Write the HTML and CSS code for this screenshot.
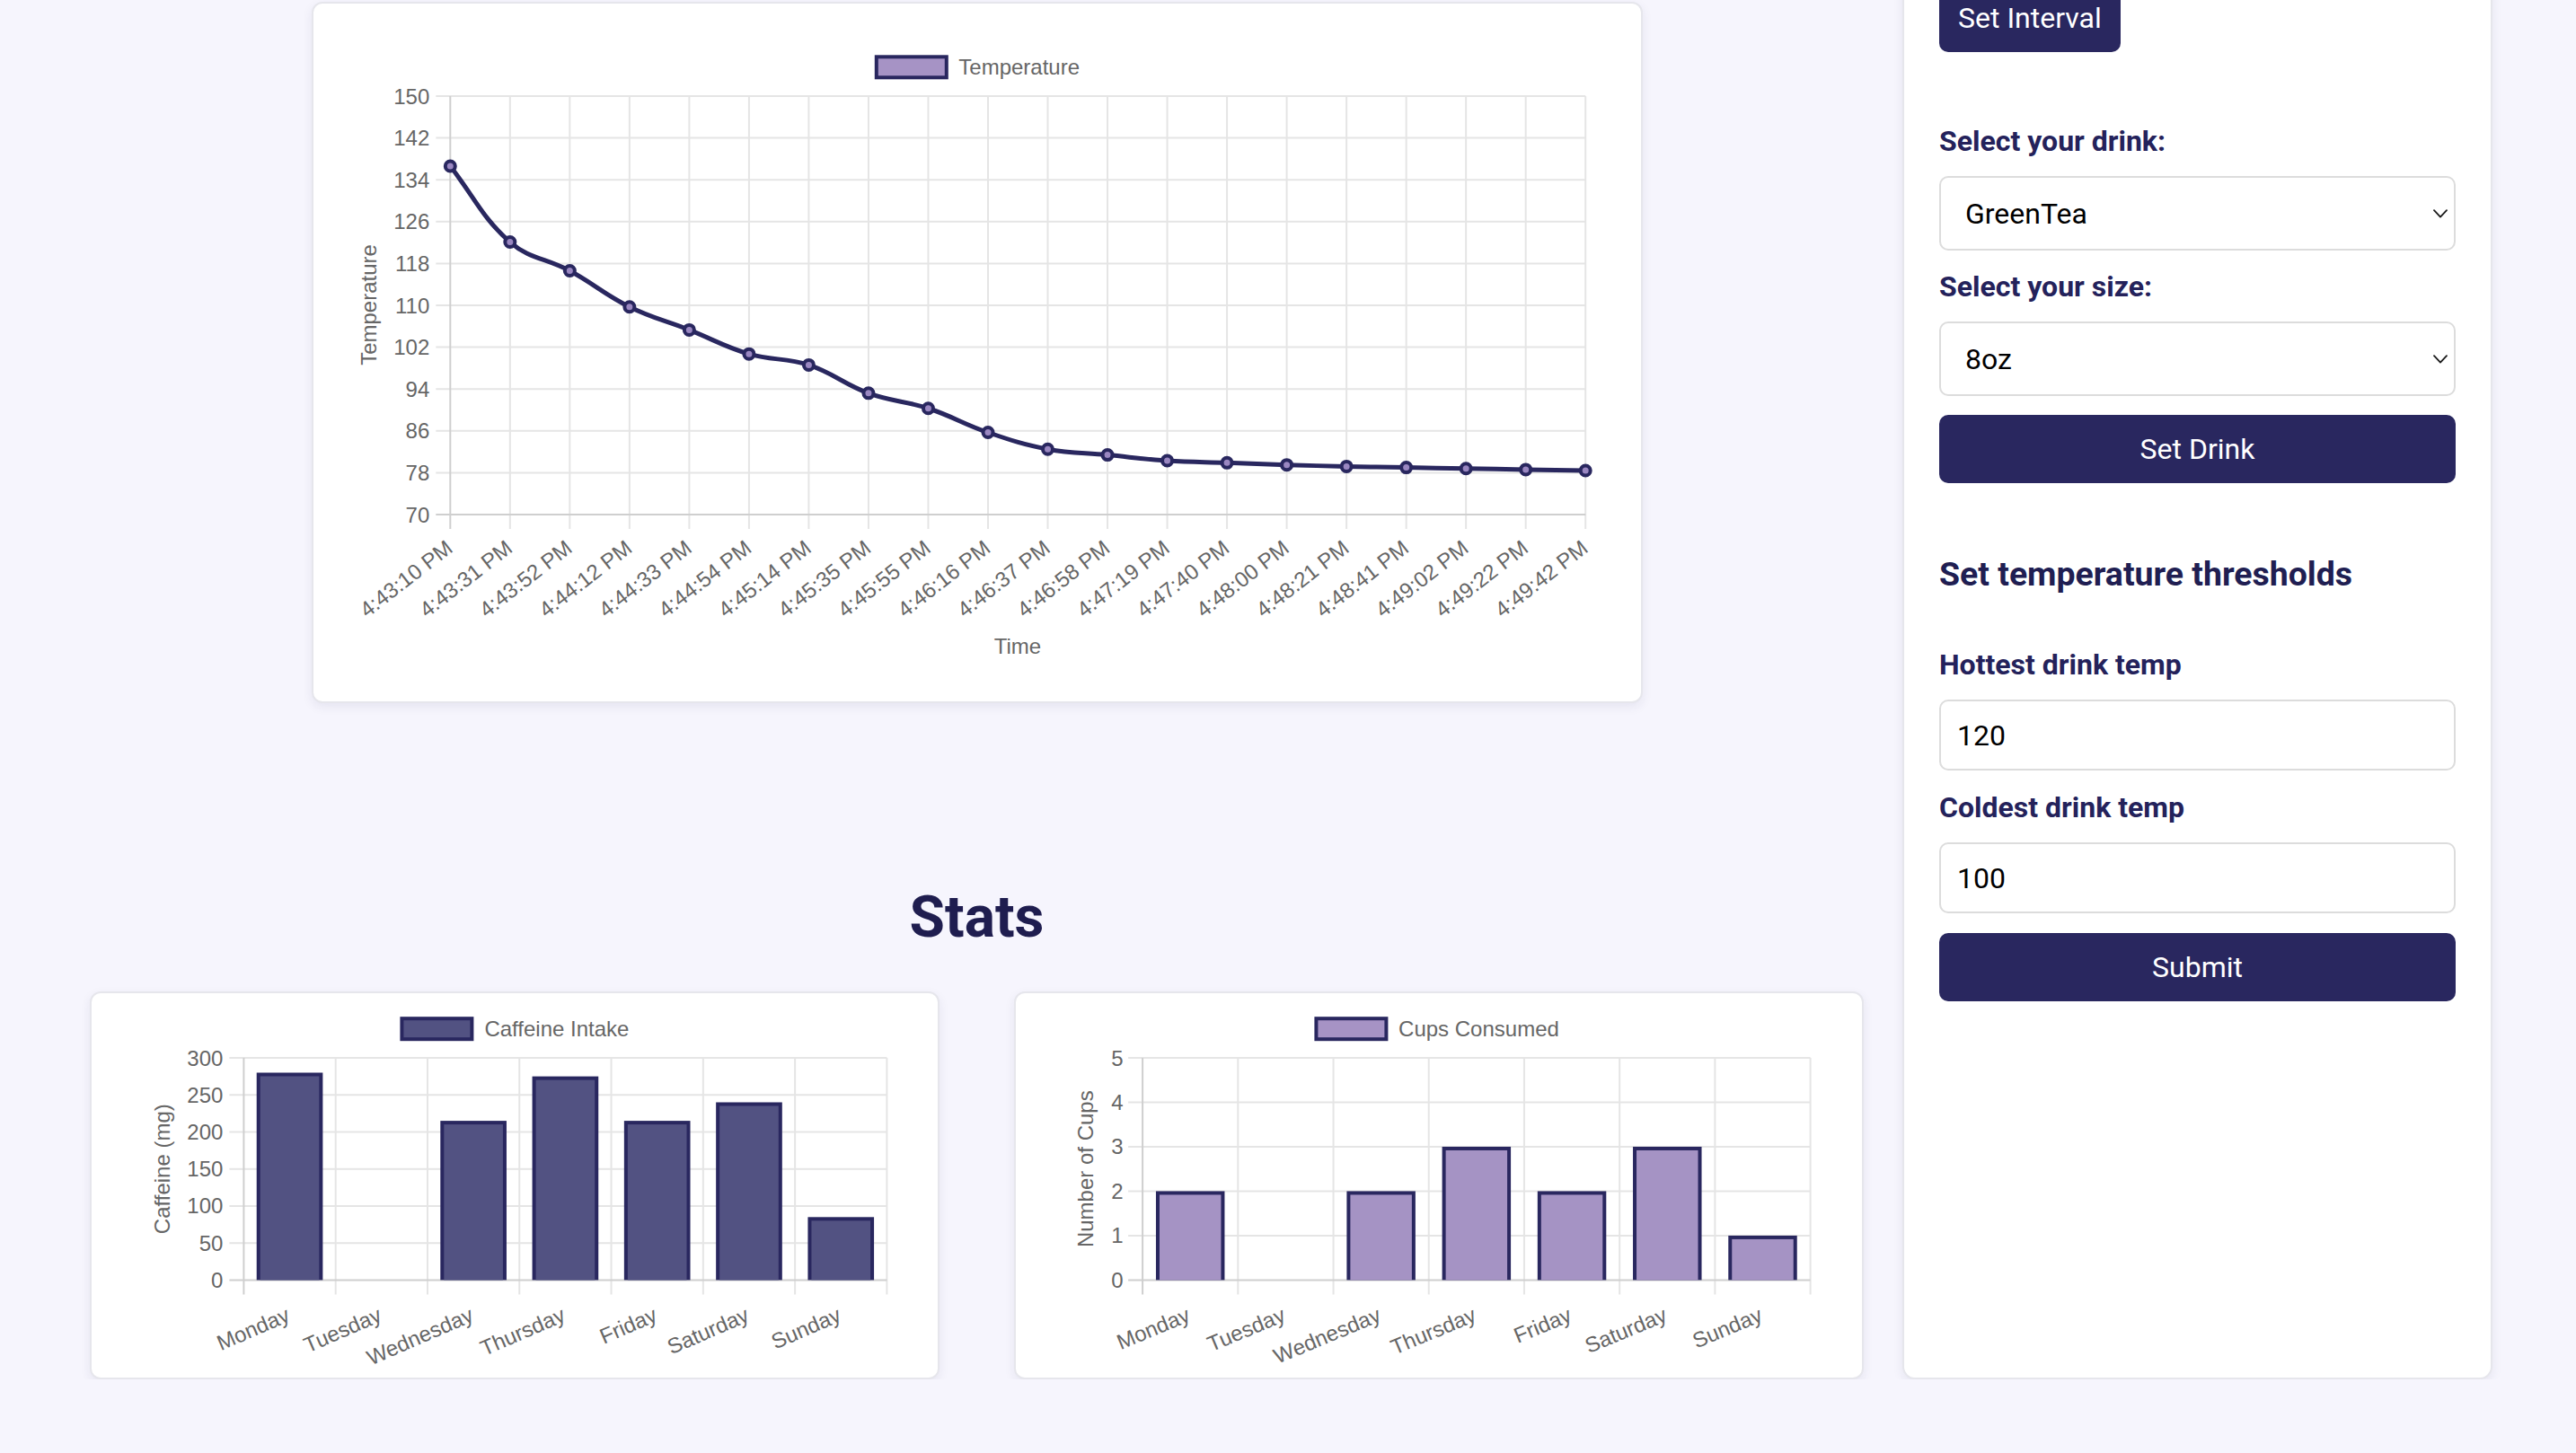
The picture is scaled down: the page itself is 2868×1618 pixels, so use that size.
FILE: index.html
```html
<!DOCTYPE html>
<html lang="en">
<head>
<meta charset="utf-8">
<title>Drink Temperature Monitor</title>
<link rel="stylesheet" href="styles.css">
</head>
<body>
<div class="layout">
  <main class="main">
    <section class="card chart-temp"><div id="tempChart" class="chart"></div></section>
    <h2 class="stats-title">Stats</h2>
    <div class="stats-row">
      <section class="card chart-small"><div id="caffeineChart" class="chart"></div></section>
      <section class="card chart-small"><div id="cupsChart" class="chart"></div></section>
    </div>
  </main>
  <aside class="sidebar">
    <button class="btn btn-interval" type="button">Set Interval</button>

    <label class="field-label label-first" for="drink">Select your drink:</label>
    <div class="select-wrap">
      <select id="drink" class="select"><option>GreenTea</option><option>Coffee</option><option>BlackTea</option></select>
      <svg class="chev" width="16" height="10" viewBox="0 0 16 10"><path d="M1 1.2 L8 8.6 L15 1.2" fill="none" stroke="#1a1a1a" stroke-width="1.8" stroke-linecap="round" stroke-linejoin="round"/></svg>
    </div>

    <label class="field-label" for="size">Select your size:</label>
    <div class="select-wrap">
      <select id="size" class="select"><option>8oz</option><option>12oz</option><option>16oz</option></select>
      <svg class="chev" width="16" height="10" viewBox="0 0 16 10"><path d="M1 1.2 L8 8.6 L15 1.2" fill="none" stroke="#1a1a1a" stroke-width="1.8" stroke-linecap="round" stroke-linejoin="round"/></svg>
    </div>

    <button class="btn btn-block" type="button">Set Drink</button>

    <h3 class="section-title">Set temperature thresholds</h3>

    <label class="field-label" for="hot">Hottest drink temp</label>
    <input id="hot" class="input" type="text" value="120">

    <label class="field-label" for="cold">Coldest drink temp</label>
    <input id="cold" class="input" type="text" value="100">

    <button class="btn btn-block btn-submit" type="button">Submit</button>
  </aside>
</div>
<script src="script.js"></script>
</body>
</html>
```

FILE: styles.css
```css
* { box-sizing: border-box; }

html, body { margin: 0; padding: 0; }

body {
  background: #f6f5fd;
  font-family: Roboto, "Liberation Sans", Arial, sans-serif;
  overflow: hidden;
}

.layout {
  display: flex;
  align-items: stretch;
  gap: 23px;
  margin-top: -60px;
  padding: 0 93px 0 80px;
}

.main {
  width: 2015px;
  flex: none;
  display: flex;
  flex-direction: column;
  align-items: center;
  padding-top: 61.7px;
}

.card {
  background: #ffffff;
  border: 2px solid #e6e6ec;
  border-radius: 12px;
  box-shadow: 0 4px 12px rgba(40, 40, 90, 0.08);
}

.chart-temp {
  width: 1482px;
  height: 781px;
}

.chart-small {
  width: 945.5px;
  height: 431.5px;
}

.chart svg { display: block; }

.stats-title {
  margin: 201px 0 45.4px;
  font-size: 64px;
  line-height: 75px;
  font-weight: 700;
  color: #1f1d4f;
  text-align: center;
}

.stats-row {
  display: flex;
  gap: 83.4px;
}

.sidebar {
  width: 657px;
  flex: none;
  background: #ffffff;
  border: 2px solid #e6e6ec;
  border-radius: 14px;
  box-shadow: 0 4px 12px rgba(40, 40, 90, 0.08);
  padding: 40px 39px;
  display: flex;
  flex-direction: column;
}

.btn {
  background: #29275f;
  color: #ffffff;
  border: 0;
  border-radius: 10px;
  font-family: Roboto, "Liberation Sans", Arial, sans-serif;
  font-size: 32px;
  line-height: 36px;
  font-weight: 400;
  height: 76px;
  cursor: pointer;
}

.btn-interval {
  align-self: flex-start;
  padding: 0 21px;
}

.btn-block {
  width: 100%;
  padding: 0;
}

.field-label {
  display: block;
  font-size: 32px;
  line-height: 38px;
  font-weight: 700;
  color: #24225b;
  margin: 0 0 20px;
}

.label-first { margin-top: 80px; }

.select-wrap {
  position: relative;
  margin-bottom: 21px;
}

.select {
  display: block;
  width: 100%;
  height: 83px;
  border: 2px solid #dcdcdc;
  border-radius: 10px;
  background: #ffffff;
  color: #000000;
  font-family: Roboto, "Liberation Sans", Arial, sans-serif;
  font-size: 32px;
  padding: 0 40px 0 27px;
  -webkit-appearance: none;
  appearance: none;
  outline: none;
}

.chev {
  position: absolute;
  right: 9px;
  top: 50%;
  margin-top: -5px;
}

.section-title {
  margin: 79px 0 60px;
  font-size: 37.44px;
  line-height: 44px;
  font-weight: 700;
  color: #201e52;
}

.input {
  display: block;
  width: 100%;
  height: 79px;
  border: 2px solid #dcdcdc;
  border-radius: 10px;
  background: #ffffff;
  color: #000000;
  font-family: Roboto, "Liberation Sans", Arial, sans-serif;
  font-size: 32px;
  padding: 0 18px;
  margin: 0 0 22px;
  outline: none;
}
```

FILE: script.js
```js
(function () {
  var NAVY = '#29275f', GRID = '#e5e5e5', AXIS = '#cfcfcf', TXT = '#666666';

  function f(n) { return Math.round(n * 100) / 100; }
  function line(x1, y1, x2, y2, c) {
    return '<line x1="' + f(x1) + '" y1="' + f(y1) + '" x2="' + f(x2) + '" y2="' + f(y2) + '" stroke="' + c + '" stroke-width="2"/>';
  }
  function text(x, y, str, anchor) {
    return '<text x="' + f(x) + '" y="' + f(y) + '" text-anchor="' + anchor + '">' + str + '</text>';
  }

  function splinePath(pts, t) {
    var cps = [], i;
    for (i = 0; i < pts.length; i++) {
      var p = pts[i], prev = pts[i - 1] || p, next = pts[i + 1] || p;
      var d01 = Math.sqrt(Math.pow(p.x - prev.x, 2) + Math.pow(p.y - prev.y, 2));
      var d12 = Math.sqrt(Math.pow(next.x - p.x, 2) + Math.pow(next.y - p.y, 2));
      var s01 = d01 / (d01 + d12), s12 = d12 / (d01 + d12);
      if (isNaN(s01)) s01 = 0;
      if (isNaN(s12)) s12 = 0;
      var fa = t * s01, fb = t * s12;
      cps.push({
        px: p.x - fa * (next.x - prev.x), py: p.y - fa * (next.y - prev.y),
        nx: p.x + fb * (next.x - prev.x), ny: p.y + fb * (next.y - prev.y)
      });
    }
    var d = 'M' + f(pts[0].x) + ' ' + f(pts[0].y);
    for (i = 1; i < pts.length; i++) {
      d += ' C' + f(cps[i - 1].nx) + ' ' + f(cps[i - 1].ny) + ' ' + f(cps[i].px) + ' ' + f(cps[i].py) + ' ' + f(pts[i].x) + ' ' + f(pts[i].y);
    }
    return d;
  }

  function build(c) {
    var s = '', i, cw = 0;
    var n = c.labels.length;
    function yPix(v) { return c.y1 - (v - c.yMin) / (c.yMax - c.yMin) * (c.y1 - c.y0); }
    var centers = [], lines = [];
    if (c.type === 'line') {
      for (i = 0; i < n; i++) centers.push(c.x0 + i * (c.x1 - c.x0) / (n - 1));
      lines = centers.slice();
    } else {
      cw = (c.x1 - c.x0) / n;
      for (i = 0; i < n; i++) centers.push(c.x0 + (i + 0.5) * cw);
      for (i = 0; i <= n; i++) lines.push(c.x0 + i * cw);
    }
    for (i = 1; i < lines.length; i++) s += line(lines[i], c.y0, lines[i], c.y1 + 16, GRID);
    var steps = Math.round((c.yMax - c.yMin) / c.yStep);
    for (i = 0; i <= steps; i++) {
      var v = c.yMin + i * c.yStep, y = yPix(v);
      if (i > 0) s += line(c.x0 - 16, y, c.x1, y, GRID);
      s += text(c.yLabelRight, y + 8.5, String(v), 'end');
    }
    s += line(c.x0, c.y0, c.x0, c.y1 + 16, AXIS);
    s += line(c.x0 - 16, c.y1, c.x1, c.y1, AXIS);

    if (c.type === 'bar') {
      c.data.forEach(function (val, idx) {
        if (!val) return;
        var bw = cw * 0.72, x = centers[idx] - bw / 2, top = yPix(val), h = c.y1 - top;
        s += '<rect x="' + f(x) + '" y="' + f(top) + '" width="' + f(bw) + '" height="' + f(h) + '" fill="' + NAVY + '"/>';
        s += '<rect x="' + f(x + 4) + '" y="' + f(top + 4) + '" width="' + f(bw - 8) + '" height="' + f(h - 4) + '" fill="' + c.barFill + '"/>';
      });
    } else {
      var pts = c.data.map(function (val, idx) { return { x: centers[idx], y: yPix(val) }; });
      s += '<path d="' + splinePath(pts, 0.4) + '" fill="none" stroke="' + NAVY + '" stroke-width="5" stroke-linejoin="round" stroke-linecap="round"/>';
      pts.forEach(function (p) {
        s += '<circle cx="' + f(p.x) + '" cy="' + f(p.y) + '" r="5.5" fill="#9a87c1" stroke="' + NAVY + '" stroke-width="4"/>';
      });
    }

    centers.forEach(function (x, idx) {
      s += '<g transform="translate(' + f(x + c.ldx) + ',' + f(c.y1 + 22 + c.ldy) + ') rotate(' + (-c.rot) + ')"><text x="0" y="21.7" text-anchor="end">' + c.labels[idx] + '</text></g>';
    });

    s += '<text transform="translate(' + c.yt[0] + ',' + c.yt[1] + ') rotate(-90)" x="0" y="8.6" text-anchor="middle">' + c.yTitle + '</text>';
    if (c.xTitle) s += text(c.xt[0], c.xt[1], c.xTitle, 'middle');

    var L = c.legend;
    s += '<rect x="' + f(L.x + 2) + '" y="' + f(L.cy - 11.5) + '" width="78" height="23" fill="' + L.fill + '" stroke="' + NAVY + '" stroke-width="4"/>';
    s += text(L.tx, L.cy + 8.6, L.text, 'start');

    var iw = c.w - 4, ih = c.h - 4;
    return '<svg xmlns="http://www.w3.org/2000/svg" width="' + iw + '" height="' + ih + '" viewBox="2 2 ' + iw + ' ' + ih + '" font-family="Liberation Sans, Arial, Helvetica, sans-serif" font-size="24" fill="' + TXT + '">' + s + '</svg>';
  }

  var times = ['4:43:10 PM', '4:43:31 PM', '4:43:52 PM', '4:44:12 PM', '4:44:33 PM', '4:44:54 PM', '4:45:14 PM',
    '4:45:35 PM', '4:45:55 PM', '4:46:16 PM', '4:46:37 PM', '4:46:58 PM', '4:47:19 PM', '4:47:40 PM',
    '4:48:00 PM', '4:48:21 PM', '4:48:41 PM', '4:49:02 PM', '4:49:22 PM', '4:49:42 PM'];
  var temps = [136.6, 122.1, 116.6, 109.7, 105.3, 100.7, 98.6, 93.2, 90.3, 85.7, 82.5, 81.4, 80.3, 79.9, 79.5, 79.2, 79.0, 78.8, 78.6, 78.4];
  var days = ['Monday', 'Tuesday', 'Wednesday', 'Thursday', 'Friday', 'Saturday', 'Sunday'];

  document.getElementById('tempChart').innerHTML = build({
    type: 'line', w: 1482, h: 781,
    x0: 154.3, x1: 1418.2, y0: 105, y1: 571,
    yMin: 70, yMax: 150, yStep: 8, yLabelRight: 131.3,
    labels: times, data: temps, rot: 37.85, ldx: -9, ldy: 1,
    yTitle: 'Temperature', yt: [63, 337.5],
    xTitle: 'Time', xt: [786, 726.3],
    legend: { x: 626.8, cy: 72.8, tx: 720.3, text: 'Temperature', fill: '#a693c5' }
  });

  document.getElementById('caffeineChart').innerHTML = build({
    type: 'bar', w: 945.5, h: 431.5,
    x0: 171.4, x1: 887.4, y0: 74, y1: 321.4,
    yMin: 0, yMax: 300, yStep: 50, yLabelRight: 148.4,
    labels: days, data: [280, 0, 215, 275, 215, 240, 85], rot: 23.5, ldx: -7, ldy: 3,
    barFill: '#525282',
    yTitle: 'Caffeine (mg)', yt: [80, 197.7],
    legend: { x: 345.4, cy: 41.7, tx: 439.4, text: 'Caffeine Intake', fill: '#525282' }
  });

  document.getElementById('cupsChart').innerHTML = build({
    type: 'bar', w: 945.5, h: 431.5,
    x0: 143.1, x1: 886.6, y0: 74, y1: 321.4,
    yMin: 0, yMax: 5, yStep: 1, yLabelRight: 121.6,
    labels: days, data: [2, 0, 2, 3, 2, 3, 1], rot: 22.6, ldx: -7, ldy: 3,
    barFill: '#a593c4',
    yTitle: 'Number of Cups', yt: [79.3, 197.7],
    legend: { x: 334.4, cy: 41.7, tx: 428.1, text: 'Cups Consumed', fill: '#a693c5' }
  });
})();
```
